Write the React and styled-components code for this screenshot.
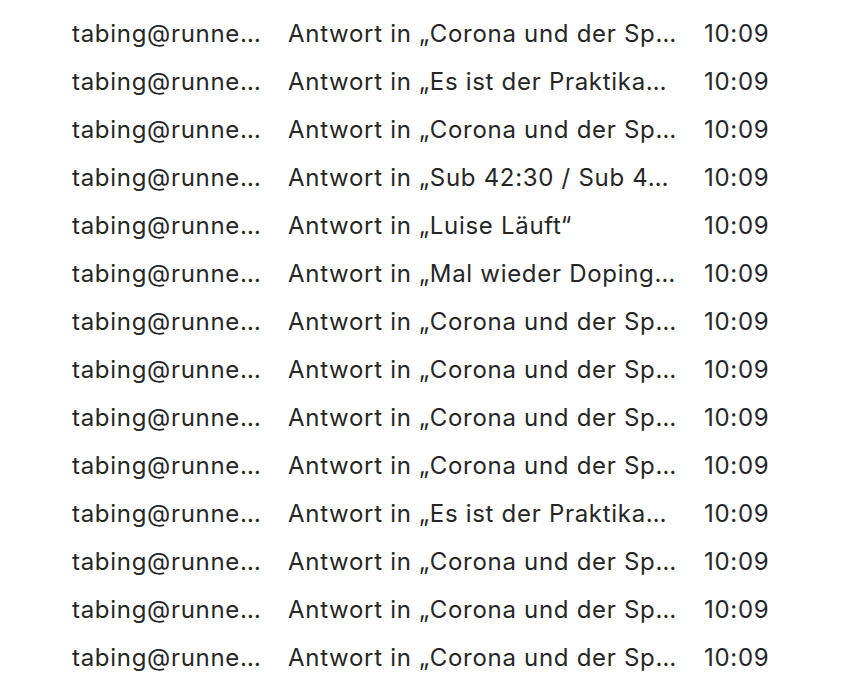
import React from 'react';
import styled, { createGlobalStyle } from 'styled-components';

const GlobalStyle = createGlobalStyle`
  body {
    margin: 0;
    background: #ffffff;
    font-family: Inter, "Noto Sans", sans-serif;
  }
`;

const List = styled.div`
  display: flex;
  flex-direction: column;
  padding: 9px 0 0 72px;
`;

const Row = styled.div`
  display: grid;
  grid-template-columns: 190px 390px auto;
  column-gap: 26px;
  align-items: center;
  height: 48px;
  font-size: 24px;
  color: #262626;
  letter-spacing: 0.7px;
`;

const Cell = styled.span`
  white-space: nowrap;
  overflow: hidden;
  text-overflow: ellipsis;
`;

const messages = [
  'Antwort in „Corona und der Sp…',
  'Antwort in „Es ist der Praktika…',
  'Antwort in „Corona und der Sp…',
  'Antwort in „Sub 42:30 / Sub 4…',
  'Antwort in „Luise Läuft“',
  'Antwort in „Mal wieder Doping…',
  'Antwort in „Corona und der Sp…',
  'Antwort in „Corona und der Sp…',
  'Antwort in „Corona und der Sp…',
  'Antwort in „Corona und der Sp…',
  'Antwort in „Es ist der Praktika…',
  'Antwort in „Corona und der Sp…',
  'Antwort in „Corona und der Sp…',
  'Antwort in „Corona und der Sp…',
];

const App = () => (
  <>
    <GlobalStyle />
    <List>
      {messages.map((subject, i) => (
        <Row key={i}>
          <Cell>tabing@runne…</Cell>
          <Cell>{subject}</Cell>
          <Cell>10:09</Cell>
        </Row>
      ))}
    </List>
  </>
);

export default App;
